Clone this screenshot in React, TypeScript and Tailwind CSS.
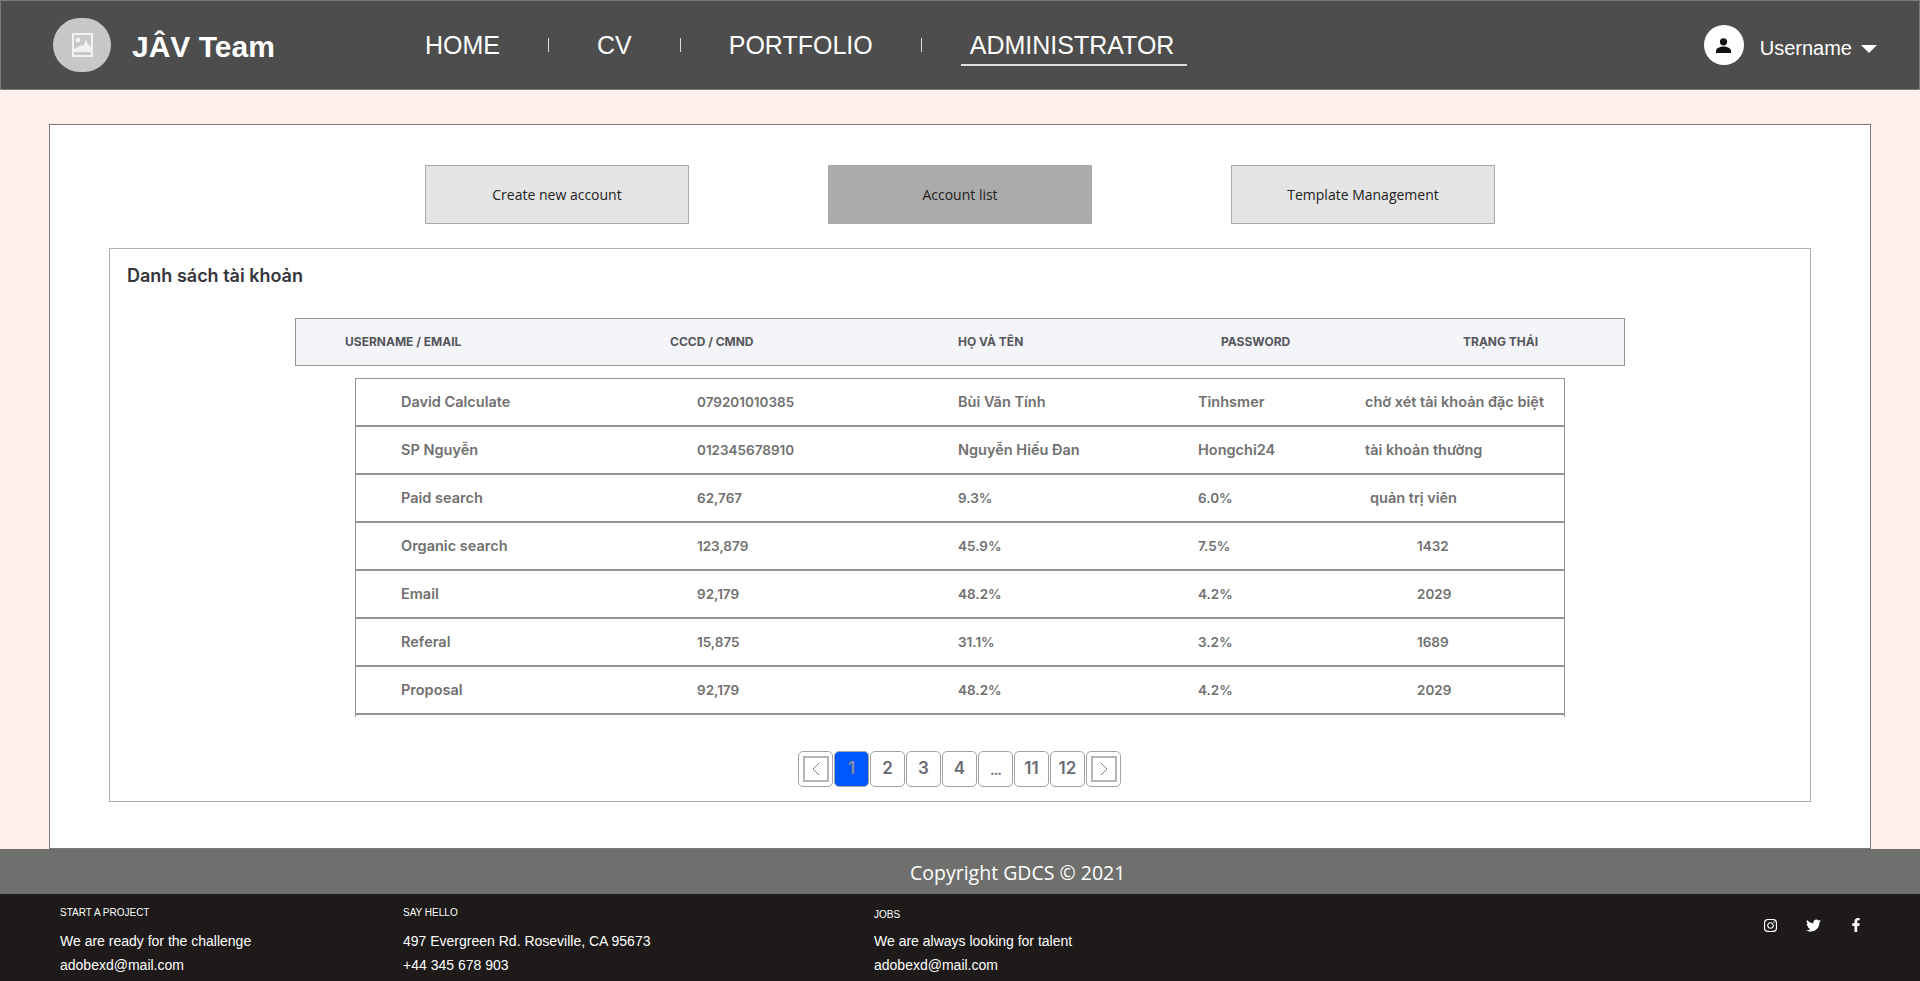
import { ChevronLeft, ChevronRight } from "lucide-react";
import { FaFacebookF, FaInstagram, FaTwitter } from "react-icons/fa";

const rows = [
  ["David Calculate", "079201010385", "Bùi Văn Tính", "Tinhsmer", "chờ xét tài khoản đặc biệt", "ml-0"],
  ["SP Nguyễn", "012345678910", "Nguyễn Hiếu Đan", "Hongchi24", "tài khoản thường", "ml-0"],
  ["Paid search", "62,767", "9.3%", "6.0%", "quản trị viên", "ml-[5px]"],
  ["Organic search", "123,879", "45.9%", "7.5%", "1432", "ml-[52px]"],
  ["Email", "92,179", "48.2%", "4.2%", "2029", "ml-[52px]"],
  ["Referal", "15,875", "31.1%", "3.2%", "1689", "ml-[52px]"],
  ["Proposal", "92,179", "48.2%", "4.2%", "2029", "ml-[52px]"],
];

const pages = ["1", "2", "3", "4", "...", "11", "12"];

const cellSize = (value: string) => (/^[\d.,%]+$/.test(value) ? "text-[13.5px]" : "text-[14.5px]");

const NavLink = ({ label, active }: { label: string; active?: boolean }) => (
  <a className={`block h-[46px] whitespace-nowrap border-b-2 pt-[9px] text-[25px] leading-[32px] text-white ${active ? "border-[#ddd] pl-[9px] pr-[13px]" : "border-transparent px-2"}`}>
    {label}
  </a>
);

const Divider = () => <span className="mt-[4px] h-[14px] w-px bg-[#ddd]" />;

const TabButton = ({ label, active }: { label: string; active?: boolean }) => (
  <button className={`h-[59px] w-[264px] border border-[#a9a9a9] font-['Open_Sans',sans-serif] text-[14px] text-[#222] ${active ? "bg-[#ababab]" : "bg-[#e4e4e4]"}`}>
    {label}
  </button>
);

const PageBox = ({ children, active }: { children: React.ReactNode; active?: boolean }) => (
  <div className={`flex h-[36px] w-[35px] items-center justify-center rounded-[5px] border border-[#a3a3a3] text-[17px] font-semibold ${active ? "bg-[#0057ff] text-[#8a8fa0]" : "bg-white text-[#6b6b75]"}`}>
    {children}
  </div>
);

const FooterCol = ({ title, lines, className, gap }: { title: string; lines: string[]; className: string; gap: string }) => (
  <div className={className}>
    <div className="text-[10px] leading-[12px] uppercase">{title}</div>
    <div className={`${gap} text-[14px] leading-[16px]`}>{lines[0]}</div>
    <div className="mt-[8px] text-[14px] leading-[16px]">{lines[1]}</div>
  </div>
);

export default function App() {
  return (
    <div className="flex h-[981px] flex-col overflow-hidden bg-[#fff0ee] font-['Liberation_Sans',Arial,sans-serif]">
      <header className="flex h-[90px] shrink-0 items-center border border-[#7a7a7a] bg-[#4d4d4d] pl-[52px]">
        <div className="flex h-[54px] w-[58px] items-center justify-center rounded-full bg-[#c8c8c8]">
          <svg width="21" height="24" viewBox="0 0 21 24">
            <rect x="1" y="1" width="19" height="22" fill="#c8c8c8" stroke="#f1f1f1" strokeWidth="2" />
            <circle cx="6" cy="7" r="2.4" fill="#f1f1f1" />
            <path d="M2 19v-3l4-2 3-2 2 1 3-6 2 4 3 3v5z" fill="#f1f1f1" />
          </svg>
        </div>
        <div className="ml-[21px] mt-[4px] w-[285px] text-[30px] font-bold leading-none text-white">JÂV Team</div>
        <nav className="mb-[4px] flex items-center">
          <NavLink label="HOME" />
          <div className="w-[40px]" />
          <Divider />
          <div className="w-[40px]" />
          <NavLink label="CV" />
          <div className="w-[40px]" />
          <Divider />
          <div className="w-[40px]" />
          <NavLink label="PORTFOLIO" />
          <div className="w-[40px]" />
          <Divider />
          <div className="w-[39px]" />
          <NavLink label="ADMINISTRATOR" active />
        </nav>
        <div className="ml-auto mr-[42px] flex items-center">
          <div className="flex h-[40px] w-[40px] items-center justify-center rounded-full bg-white">
            <svg width="15" height="15" viewBox="0 0 15 15">
              <circle cx="7.5" cy="3.8" r="3.6" fill="#111" />
              <path d="M0 15v-2c0-3 4-4.5 7.5-4.5s7.5 1.5 7.5 4.5v2z" fill="#111" />
            </svg>
          </div>
          <span className="ml-[16px] mt-[5px] text-[20px] text-white">Username</span>
          <span className="ml-[9px] mt-[8px] h-0 w-0 border-x-[8px] border-t-[8px] border-x-transparent border-t-white" />
        </div>
      </header>

      <main className="flex-1 px-[49px] pt-[34px]">
        <div className="h-[725px] border border-[#777] bg-white">
          <div className="flex justify-center gap-[139px] pt-[40px]">
            <TabButton label="Create new account" />
            <TabButton label="Account list" active />
            <TabButton label="Template Management" />
          </div>
          <section className="mx-[59px] mt-[24px] h-[554px] border border-[#b0b0b0] pt-[14px] font-['Inter',sans-serif]">
            <h2 className="pl-[17px] text-[18px] font-semibold leading-[26px] text-[#34343c]">Danh sách tài khoản</h2>
            <div className="mx-[185px] mt-[29px] grid h-[48px] grid-cols-[325px_288px_263px_242px_1fr] items-center border border-[#959595] bg-[#f4f5f9] pl-[49px] text-[12px] font-bold uppercase text-[#55555c]">
              <span>Username / Email</span>
              <span>CCCD / CMND</span>
              <span>Họ và tên</span>
              <span>Password</span>
              <span>Trạng thái</span>
            </div>
            <div className="mx-[245px] mt-[12px] h-[339px] border-x border-t border-[#959595]">
              {rows.map((row) => (
                <div key={row[0] + row[1]} className="grid h-[48px] grid-cols-[296px_261px_240px_167px_1fr] items-center border-b-2 border-[#959595] pl-[45px] font-semibold whitespace-nowrap text-[#707070]">
                  <span className={cellSize(row[0])}>{row[0]}</span>
                  <span className={cellSize(row[1])}>{row[1]}</span>
                  <span className={cellSize(row[2])}>{row[2]}</span>
                  <span className={cellSize(row[3])}>{row[3]}</span>
                  <span className={`${row[5]} ${cellSize(row[4])}`}>{row[4]}</span>
                </div>
              ))}
            </div>
            <div className="mt-[34px] flex justify-center gap-px pr-[1px]">
              <PageBox>
                <span className="flex h-[26px] w-[26px] items-center justify-center border-2 border-[#b5b5b5]">
                  <ChevronLeft className="shrink-0" size={24} strokeWidth={0.8} color="#5a5a8a" />
                </span>
              </PageBox>
              {pages.map((p) => (
                <PageBox key={p} active={p === "1"}>
                  {p === "..." ? <span className="text-[14px] font-bold tracking-[-1px]">{p}</span> : p}
                </PageBox>
              ))}
              <PageBox>
                <span className="flex h-[26px] w-[26px] items-center justify-center border-2 border-[#b5b5b5]">
                  <ChevronRight className="shrink-0" size={24} strokeWidth={0.8} color="#5a5a8a" />
                </span>
              </PageBox>
            </div>
          </section>
        </div>
      </main>

      <div className="flex h-[45px] shrink-0 items-center bg-[#6f6f6d] pl-[910px] pt-[3px] font-['Open_Sans',sans-serif] text-[19.5px] text-white">
        Copyright GDCS © 2021
      </div>
      <footer className="flex h-[87px] shrink-0 overflow-hidden bg-[#1d1a19] pl-[60px] pt-[13px] text-white">
        <FooterCol className="w-[343px]" gap="mt-[14px]" title="Start a project" lines={["We are ready for the challenge", "adobexd@mail.com"]} />
        <FooterCol className="w-[471px]" gap="mt-[14px]" title="Say hello" lines={["497 Evergreen Rd. Roseville, CA 95673", "+44 345 678 903"]} />
        <FooterCol className="mt-[2px] w-[889px]" gap="mt-[12px]" title="Jobs" lines={["We are always looking for talent", "adobexd@mail.com"]} />
        <div className="mt-[11px] flex gap-[28px]">
          <FaInstagram size={15} />
          <FaTwitter size={15} />
          <FaFacebookF size={14} />
        </div>
      </footer>
    </div>
  );
}
